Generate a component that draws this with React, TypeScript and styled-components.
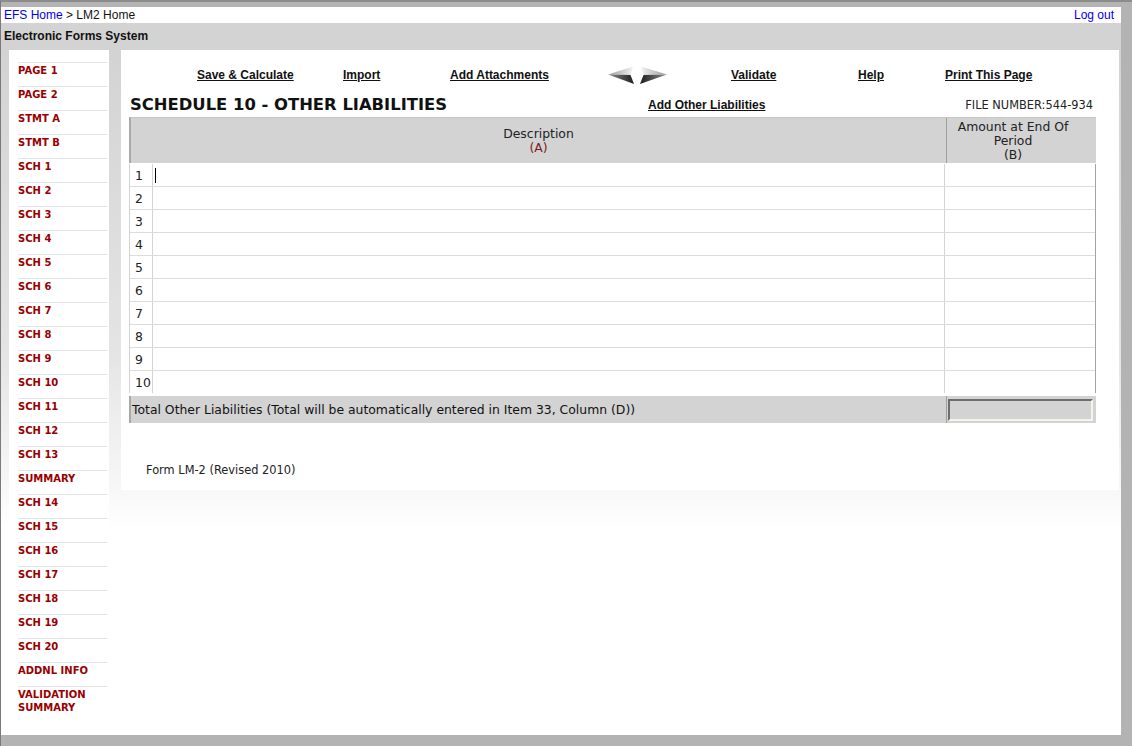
import React from 'react';
import styled, { createGlobalStyle } from 'styled-components';

const Global = createGlobalStyle`
  html, body { margin: 0; padding: 0; background: #b3b3b3; }
  body { font-family: "DejaVu Sans", Verdana, sans-serif; }
  #root { width: 1132px; height: 746px; overflow: hidden; }
  * { box-sizing: border-box; }
`;

const Page = styled.div`
  width: 1132px;
  height: 746px;
  background: #b3b3b3;
  border-top: 2px solid #8c8c8c;
  border-left: 1px solid #7a7a7a;
  padding: 5px 11px 11px 0;
`;

const Frame = styled.div`
  display: flex;
  flex-direction: column;
  height: 100%;
`;

const TopBar = styled.div`
  height: 16px;
  background: #fff;
  display: flex;
  align-items: center;
  justify-content: space-between;
  padding: 0 7px 0 3px;
  font-family: "Liberation Sans", Arial, sans-serif;
  font-size: 12px;
  line-height: 16px;
`;

const Crumbs = styled.div`
  color: #111;
`;

const BlueLink = styled.a`
  color: #0000ee;
  text-decoration: none;
`;

const TitleBand = styled.div`
  height: 27px;
  background: #d3d3d3;
  padding-left: 3px;
  font-family: "Liberation Sans", Arial, sans-serif;
  font-weight: bold;
  font-size: 12px;
  line-height: 27px;
  color: #111;
`;

const Body = styled.div`
  flex: 1;
  display: flex;
  gap: 12px;
  padding: 0 2px 0 8px;
  background: linear-gradient(to bottom, #d3d3d3 0px, #e4e4e4 300px, #f6f6f6 430px, #ffffff 480px);
`;

const Sidebar = styled.nav`
  width: 100px;
  flex: none;
  background: #fff;
  padding: 12px 2px 0 9px;
`;

const NavItem = styled.a`
  display: block;
  border-top: 1px solid #e2e2e2;
  padding: 1px 0 9px;
  font-family: "DejaVu Sans", Verdana, sans-serif;
  font-weight: bold;
  font-size: 10px;
  line-height: 13px;
  color: #990000;
  text-decoration: none;
`;

const Main = styled.main`
  flex: 1;
  align-self: flex-start;
  background: #fff;
  padding: 16px 23px 13px 8px;
`;

const Toolbar = styled.div`
  display: grid;
  grid-template-columns: 146px 107px 158px 123px 127px 87px auto;
  align-items: center;
  height: 18px;
  margin-left: 68px;
`;

const ToolLink = styled.a`
  font-family: "Liberation Sans", Arial, sans-serif;
  font-weight: bold;
  font-size: 12px;
  line-height: 14px;
  color: #111;
  text-decoration: underline;
  white-space: nowrap;
`;

const Arrows = styled.div`
  display: flex;
  height: 18px;
`;

const TitleRow = styled.div`
  display: grid;
  grid-template-columns: 519px auto 1fr;
  align-items: center;
  height: 20px;
  margin: 11px 0 2px;
`;

const Title = styled.h1`
  margin: 0;
  padding-left: 1px;
  font-family: "DejaVu Sans", Verdana, sans-serif;
  font-weight: bold;
  font-size: 16.4px;
  line-height: 20px;
  color: #111;
  white-space: nowrap;
`;

const FileNo = styled.div`
  text-align: right;
  padding-right: 3px;
  font-size: 11.4px;
  color: #222;
  white-space: nowrap;
`;

const Table = styled.div`
  width: 967px;
`;

const HeadRow = styled.div`
  display: grid;
  grid-template-columns: 815px 150px;
  height: 46px;
  background: #d3d3d3;
  border-left: 2px solid #a9a9a9;
  border-top: 1px solid #c6c6c6;
`;

const HeadCell = styled.div<{ $divider?: boolean; $padRight?: number }>`
  display: flex;
  flex-direction: column;
  align-items: center;
  justify-content: center;
  padding-right: ${(p) => p.$padRight ?? 0}px;
  border-left: ${(p) => (p.$divider ? '1px solid #a0a0a0' : 'none')};
  font-size: 12.4px;
  line-height: 14px;
  color: #222;
  text-align: center;
`;

const ColLetter = styled.span`
  color: #7b1c1c;
`;

const Rows = styled.div`
  margin-top: 1px;
  border-left: 1px solid #d4d4d4;
  border-right: 1px solid #a3a3a3;
`;

const Row = styled.div<{ $last?: boolean }>`
  display: grid;
  grid-template-columns: 23px 792px 150px;
  height: ${(p) => (p.$last ? 22 : 23)}px;
  border-bottom: ${(p) => (p.$last ? 'none' : '1px solid #dcdcdc')};
`;

const NumCell = styled.div`
  display: flex;
  align-items: center;
  padding: 1px 0 0 5px;
  border-right: 1px solid #d4d4d4;
  font-size: 12.4px;
  color: #222;
`;

const DescCell = styled.div`
  display: flex;
  align-items: center;
  border-right: 1px solid #d4d4d4;
`;

const AmtCell = styled.div``;

const Caret = styled.span`
  display: block;
  width: 1px;
  height: 15px;
  margin-left: 2px;
  background: #000;
`;

const TotalRow = styled.div`
  display: grid;
  grid-template-columns: 815px 150px;
  height: 27px;
  margin-top: 3px;
  background: #d3d3d3;
  border-left: 2px solid #a9a9a9;
`;

const TotalLabel = styled.div`
  padding-left: 1px;
  font-size: 12.4px;
  line-height: 27px;
  color: #111;
  white-space: nowrap;
`;

const TotalAmtCell = styled.div`
  border-left: 1px solid #a0a0a0;
  padding: 3px 3px 2px 1px;
`;

const TotalBox = styled.div`
  width: 145px;
  height: 22px;
  background: #d3d3d3;
  border: 2px solid;
  border-color: #6e6e6e #f4f4ea #f4f4ea #6e6e6e;
`;

const Footer = styled.div`
  margin-top: 40px;
  padding-left: 17px;
  font-size: 11.4px;
  line-height: 14px;
  color: #222;
`;

const navItems = [
  'PAGE 1', 'PAGE 2', 'STMT A', 'STMT B',
  'SCH 1', 'SCH 2', 'SCH 3', 'SCH 4', 'SCH 5', 'SCH 6', 'SCH 7', 'SCH 8', 'SCH 9',
  'SCH 10', 'SCH 11', 'SCH 12', 'SCH 13', 'SUMMARY',
  'SCH 14', 'SCH 15', 'SCH 16', 'SCH 17', 'SCH 18', 'SCH 19', 'SCH 20',
  'ADDNL INFO', 'VALIDATION SUMMARY',
];

const ArrowIcons = () => (
  <svg width="60" height="18" viewBox="0 0 60 18">
    <defs>
      <linearGradient id="lu" x1="0" y1="0" x2="1" y2="0">
        <stop offset="0" stopColor="#9a9a9a" />
        <stop offset="0.7" stopColor="#d8d8d8" />
        <stop offset="1" stopColor="#f4f4f4" />
      </linearGradient>
      <linearGradient id="ll" x1="0" y1="0" x2="1" y2="0">
        <stop offset="0" stopColor="#909090" />
        <stop offset="0.6" stopColor="#4a4a4a" />
        <stop offset="1" stopColor="#1e1e1e" />
      </linearGradient>
      <linearGradient id="ru" x1="1" y1="0" x2="0" y2="0">
        <stop offset="0" stopColor="#9a9a9a" />
        <stop offset="0.7" stopColor="#d8d8d8" />
        <stop offset="1" stopColor="#f4f4f4" />
      </linearGradient>
      <linearGradient id="rl" x1="1" y1="0" x2="0" y2="0">
        <stop offset="0" stopColor="#909090" />
        <stop offset="0.6" stopColor="#4a4a4a" />
        <stop offset="1" stopColor="#1e1e1e" />
      </linearGradient>
    </defs>
    <polygon points="0,8.5 25,0.5 22.5,9" fill="url(#lu)" />
    <polygon points="0,8.5 22.5,9 26,18" fill="url(#ll)" />
    <polygon points="59,8.5 33,0.5 35.5,9" fill="url(#ru)" />
    <polygon points="59,8.5 35.5,9 32,18" fill="url(#rl)" />
  </svg>
);

export default function App() {
  const rows = Array.from({ length: 10 }, (_, i) => i + 1);
  return (
    <>
      <Global />
      <Page>
        <Frame>
          <TopBar>
            <Crumbs>
              <BlueLink href="#">EFS Home</BlueLink> &gt; LM2 Home
            </Crumbs>
            <BlueLink href="#">Log out</BlueLink>
          </TopBar>
          <TitleBand>Electronic Forms System</TitleBand>
          <Body>
            <Sidebar>
              {navItems.map((n) => (
                <NavItem key={n} href="#">{n}</NavItem>
              ))}
            </Sidebar>
            <Main>
              <Toolbar>
                <ToolLink href="#">Save &amp; Calculate</ToolLink>
                <ToolLink href="#">Import</ToolLink>
                <ToolLink href="#">Add Attachments</ToolLink>
                <Arrows><ArrowIcons /></Arrows>
                <ToolLink href="#">Validate</ToolLink>
                <ToolLink href="#">Help</ToolLink>
                <ToolLink href="#">Print This Page</ToolLink>
              </Toolbar>
              <TitleRow>
                <Title>SCHEDULE 10 - OTHER LIABILITIES</Title>
                <ToolLink href="#">Add Other Liabilities</ToolLink>
                <FileNo>FILE NUMBER:544-934</FileNo>
              </TitleRow>
              <Table>
                <HeadRow>
                  <HeadCell>
                    <span>Description</span>
                    <ColLetter>(A)</ColLetter>
                  </HeadCell>
                  <HeadCell $divider $padRight={17}>
                    <span>Amount at End Of</span>
                    <span>Period</span>
                    <span>(B)</span>
                  </HeadCell>
                </HeadRow>
                <Rows>
                  {rows.map((r) => (
                    <Row key={r} $last={r === 10}>
                      <NumCell>{r}</NumCell>
                      <DescCell>{r === 1 && <Caret />}</DescCell>
                      <AmtCell />
                    </Row>
                  ))}
                </Rows>
                <TotalRow>
                  <TotalLabel>
                    Total Other Liabilities (Total will be automatically entered in Item 33, Column (D))
                  </TotalLabel>
                  <TotalAmtCell>
                    <TotalBox />
                  </TotalAmtCell>
                </TotalRow>
              </Table>
              <Footer>Form LM-2 (Revised 2010)</Footer>
            </Main>
          </Body>
        </Frame>
      </Page>
    </>
  );
}
